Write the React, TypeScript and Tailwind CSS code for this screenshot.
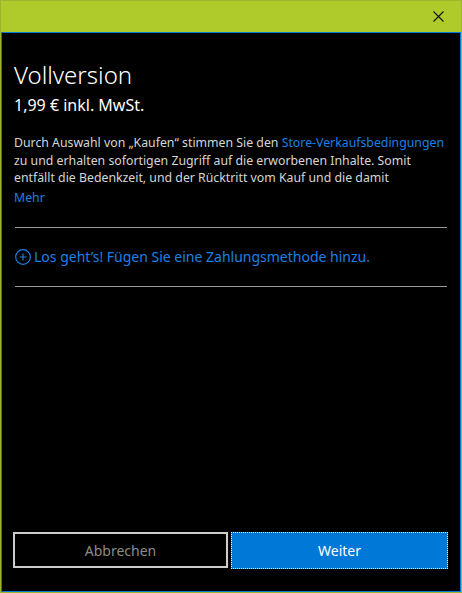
import React from "react";

export default function App() {
  const font = { fontFamily: '"Noto Sans", "Open Sans", sans-serif' };
  return (
    <div className="w-[462px] h-[593px] bg-[#afcb2b] border border-[#9db52e] flex flex-col" style={font}>
      <div className="h-[31px] flex justify-end items-center shrink-0">
        <div className="w-[46px] h-full flex items-center justify-center">
          <svg width="11" height="11" viewBox="0 0 11 11">
            <path d="M0.5 0.5 L10.5 10.5 M10.5 0.5 L0.5 10.5" stroke="#111" strokeWidth="1.1" />
          </svg>
        </div>
      </div>
      <div className="flex-1 bg-black border border-[#0078d7] flex flex-col px-[12px]">
        <div className="text-white text-[24px] font-light leading-none mt-[30px]">Vollversion</div>
        <div className="text-white text-[16px] leading-none mt-[10px]">1,99 € inkl. MwSt.</div>
        <div className="text-[#d6d6d6] text-[12.3px] leading-[17.5px] mt-[21px] whitespace-nowrap">
          <div>
            Durch Auswahl von „Kaufen“ stimmen Sie den{" "}
            <span className="text-[#1a80e6]">Store-Verkaufsbedingungen</span>
          </div>
          <div>zu und erhalten sofortigen Zugriff auf die erworbenen Inhalte. Somit</div>
          <div>entfällt die Bedenkzeit, und der Rücktritt vom Kauf und die damit</div>
        </div>
        <div className="text-[#1a80e6] text-[12.3px] leading-[18px] mt-[2px]">Mehr</div>
        <div className="h-px bg-[#9a9a9a] mt-[20px] ml-[1px] mr-[1px]" />
        <div className="flex items-center gap-[3px] h-[58px] ml-[1px] text-[#1a80e6] text-[14px]">
          <svg width="16" height="16" viewBox="0 0 16 16">
            <circle cx="8" cy="8" r="7.3" fill="none" stroke="#1a80e6" strokeWidth="1.2" />
            <path d="M8 4.5 V11.5 M4.5 8 H11.5" stroke="#1a80e6" strokeWidth="1.2" />
          </svg>
          <span>Los geht’s! Fügen Sie eine Zahlungsmethode hinzu.</span>
        </div>
        <div className="h-px bg-[#9a9a9a] ml-[1px] mr-[1px]" />
        <div className="flex-1" />
        <div className="flex gap-[3px] mb-[22px] -ml-px">
          <button className="w-[215px] h-[36px] border-2 border-[#cccccc] text-[#8c8c8c] text-[14px] flex items-center justify-center">
            Abbrechen
          </button>
          <button className="w-[217px] h-[37px] bg-[#0078d7] text-white text-[14px] flex items-center justify-center outline outline-1 outline-dotted outline-white -outline-offset-1">
            Weiter
          </button>
        </div>
      </div>
    </div>
  );
}
